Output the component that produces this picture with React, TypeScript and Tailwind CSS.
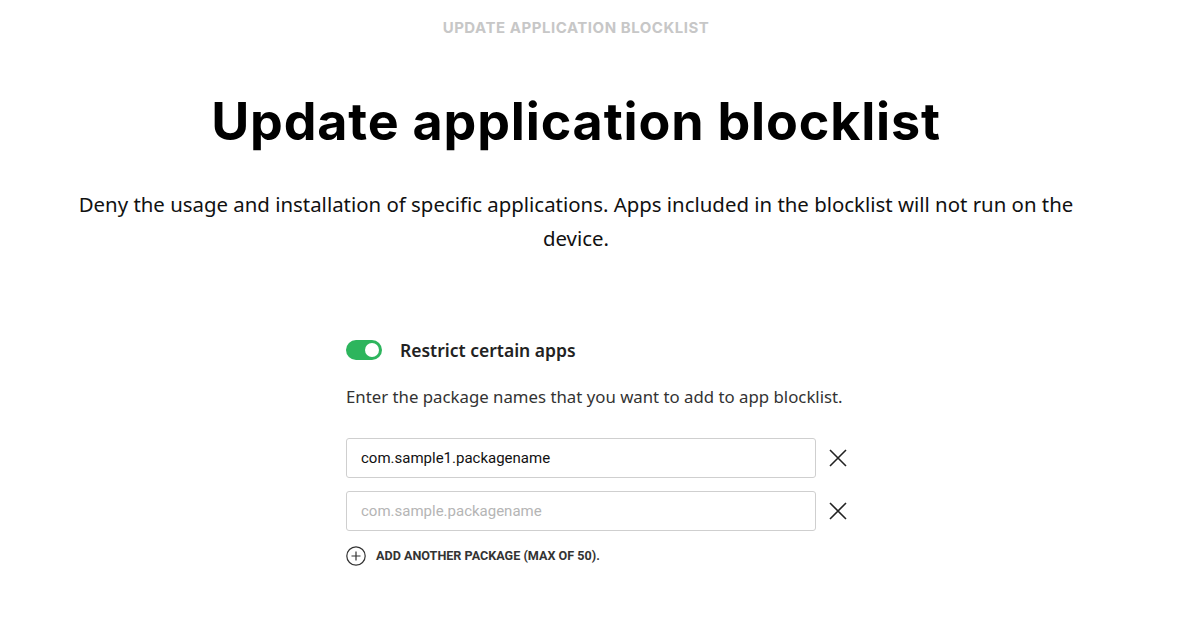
import { useState } from 'react'

function CloseIcon() {
  return (
    <svg width="20" height="20" viewBox="0 0 20 20" fill="none" stroke="#222" strokeWidth="1.6">
      <path d="M2 2 L18 18 M18 2 L2 18" />
    </svg>
  )
}

export default function App() {
  const [on, setOn] = useState(true)
  const [pkgs, setPkgs] = useState(['com.sample1.packagename', ''])

  return (
    <div className="w-[1180px] h-[626px] bg-white overflow-hidden">
      <div className="w-[1152px] flex flex-col items-center">
        <p className="mt-[19px] text-[15px] leading-[18px] font-bold tracking-[0.035em] text-[#c7c7c7] font-['Inter',sans-serif]">
          UPDATE APPLICATION BLOCKLIST
        </p>

        <h1 className="mt-[53px] text-[52px] leading-[64px] font-bold tracking-[0.016em] text-black font-['Inter',sans-serif]">
          Update application blocklist
        </h1>

        <p className="mt-[33px] w-[1010px] text-center text-[20.4px] leading-[34px] text-[#111] font-['Noto_Sans',sans-serif]">
          Deny the usage and installation of specific applications. Apps included in the blocklist will not run on the device.
        </p>

        {/* Form */}
        <div className="mt-[82px] w-[520px] ml-[60px] flex flex-col">
          <div className="flex items-center gap-[18px]">
            <button
              onClick={() => setOn(!on)}
              className={`w-[36px] h-[20px] rounded-full flex items-center px-[3px] ${on ? 'bg-[#2db55d] justify-end' : 'bg-[#bbb] justify-start'}`}
            >
              <span className="w-[14px] h-[14px] rounded-full bg-white" />
            </button>
            <span className="text-[17.5px] font-semibold text-[#222] font-['Noto_Sans',sans-serif]">Restrict certain apps</span>
          </div>

          <p className="mt-[22px] text-[16.8px] leading-[24px] text-[#333] font-['Noto_Sans',sans-serif]">
            Enter the package names that you want to add to app blocklist.
          </p>

          <div className="mt-[29px] flex flex-col gap-[13px]">
            {pkgs.map((p, i) => (
              <div key={i} className="flex items-center gap-[12px]">
                <input
                  value={p}
                  placeholder="com.sample.packagename"
                  onChange={(e) => setPkgs(pkgs.map((v, j) => (j === i ? e.target.value : v)))}
                  className="w-[470px] h-[40px] px-[14px] border border-[#cfcfcf] rounded-[3px] text-[15px] text-[#111] placeholder:text-[#b5b5b5] outline-none font-['Roboto',sans-serif]"
                />
                <button onClick={() => setPkgs(pkgs.filter((_, j) => j !== i))}>
                  <CloseIcon />
                </button>
              </div>
            ))}
          </div>

          <button
            onClick={() => setPkgs([...pkgs, ''])}
            className="mt-[15px] flex items-center gap-[10px] self-start"
          >
            <svg width="20" height="20" viewBox="0 0 20 20" fill="none" stroke="#333" strokeWidth="1.2">
              <circle cx="10" cy="10" r="9.2" />
              <path d="M10 5.5 V14.5 M5.5 10 H14.5" />
            </svg>
            <span className="text-[12.6px] font-bold text-[#333] font-['Roboto',sans-serif]">ADD ANOTHER PACKAGE (MAX OF 50).</span>
          </button>
        </div>
      </div>
    </div>
  )
}
